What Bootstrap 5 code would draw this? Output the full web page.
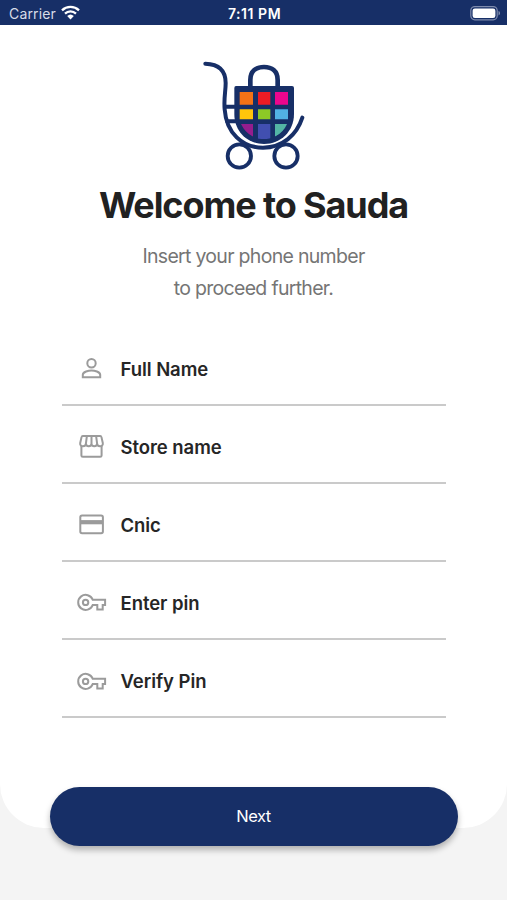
<!DOCTYPE html>
<html lang="en">
<head>
<meta charset="utf-8">
<meta name="viewport" content="width=device-width, initial-scale=1">
<title>Welcome to Sauda</title>
<link href="https://cdn.jsdelivr.net/npm/bootstrap@5.3.0/dist/css/bootstrap.min.css" rel="stylesheet">
<style>
  body { font-family: Inter, "Liberation Sans", sans-serif; background: #f4f4f4; color: #212121; height: 900px; overflow: hidden; }
  svg { display: block; flex: none; }
  .status-bar { height: 25px; background: #172f67; color: #fff; font-size: 14px; line-height: 20px; padding: 3px 7px 0 9px; }
  .status-bar > div { flex: 1 1 0; }
  .carrier { color: #d7dce8; letter-spacing: .15px; line-height: 22px; }
  .clock { font-weight: 600; font-size: 14px; line-height: 22px; letter-spacing: .55px; white-space: nowrap; }
  .panel { height: 803px; border-radius: 0 0 44px 44px; padding-top: 25px; }
  .logo { margin-left: 2px; }
  h1 { font-size: 36px; line-height: 44px; font-weight: 700; letter-spacing: -1.1px; margin-top: 3px; }
  .intro { font-size: 19.5px; line-height: 31.5px; color: #757575; letter-spacing: -.7px; margin-top: 14px; }
  .fields { width: 384px; margin-top: 23.5px; }
  .field { height: 78.15px; border-bottom: 2px solid #cacaca; padding: 6px 0 0 14px; gap: 14px; font-size: 18.5px; font-weight: 600; letter-spacing: -.06px; color: #262626; }
  .field span { padding-top: 2px; }
  .field svg { width: 31px; height: 31px; color: #9b9b9b; }
  .btn-next { width: 408px; height: 59px; margin-top: -41px; background: #172f67; font-size: 16.5px; letter-spacing: -.5px; box-shadow: 0 4px 6px rgba(0,0,0,.28); }
  .btn-next:hover { background: #1f3c80; }
</style>
</head>
<body>
<header class="status-bar d-flex">
  <div class="d-flex carrier">Carrier
    <svg class="ms-1" width="21" height="20" viewBox="0 0 21 20"><g fill="none" stroke="#fff" stroke-width="2.3"><path d="M2 7.3a12.3 12.3 0 0 1 17 0"/><path d="M5 10.6a8 8 0 0 1 11 0"/></g><path fill="#fff" d="M7.2 13a4.8 4.8 0 0 1 6.6 0l-3.3 3.6z"/></svg>
  </div>
  <div class="clock text-center">7:11 PM</div>
  <div class="d-flex justify-content-end">
    <svg width="31" height="20" viewBox="-1 0 31 20"><rect x=".8" y="3.6" width="26.4" height="13.2" rx="4" fill="none" stroke="#7e8bad" stroke-width="1.2"/><rect x="2.6" y="5.4" width="22.8" height="9.6" rx="2.3" fill="#fff"/><path fill="#7e8bad" d="M28.5 8c2.2.6 2.2 3.8 0 4.4z"/></svg>
  </div>
</header>
<main>
  <section class="panel bg-white d-flex flex-column align-items-center">
    <svg class="logo" width="130" height="130" viewBox="0 0 390 390">
      <defs><clipPath id="bag"><path d="M145 120H300V192C300 235 265 267 222 267S145 235 145 192z"/></clipPath></defs>
      <path fill="#172f67" d="M138 108H306Q312 108 312 114V192C312 244 272 282 222 282S133 244 133 192V114Q133 108 138 108z"/>
      <g clip-path="url(#bag)">
        <path fill="#f47216" d="M149 126h40v38h-40z"/><path fill="#ec1c24" d="M204 126h37v38h-37z"/><path fill="#ec068d" d="M255 126h39v38h-39z"/>
        <path fill="#ffc60b" d="M149 178h40v30h-40z"/><path fill="#8cc926" d="M204 178h37v30h-37z"/><path fill="#52b1e4" d="M255 178h39v30h-39z"/>
        <path fill="#941d8e" d="M153 222h36v38Q165 248 153 222z"/><path fill="#414fb0" d="M204 222h37v45h-37z"/><path fill="#53b5a5" d="M255 222h36q-11 26-36 38z"/>
      </g>
      <g fill="none" stroke="#172f67" stroke-linecap="round">
        <path stroke-width="14" d="M181 110V90C181 63 199 51 222 51S263 63 263 90V110"/>
        <path stroke-width="12" d="M46 41C82 42 107 58 107 99C107 126 101 143 104 178C109 249 157 293 219 293C278 293 320 255 337 203"/>
        <path stroke-width="12" d="M107 170h30M111 214h30"/>
        <circle cx="148" cy="318" r="35" stroke-width="11.5"/><circle cx="288" cy="318" r="35" stroke-width="11.5"/>
      </g>
    </svg>
    <h1 class="mb-0">Welcome to Sauda</h1>
    <p class="intro text-center mb-0">Insert your phone number<br>to proceed further.</p>
    <div class="fields">
      <div class="field d-flex align-items-center">
        <svg viewBox="0 0 31 31" fill="none" stroke="currentColor" stroke-width="2"><circle cx="15.5" cy="10.3" r="4.2"/><path d="M6.8 24.2v-2.4c0-3 5.8-4.4 8.7-4.4s8.7 1.4 8.7 4.4v2.4z"/></svg>
        <span>Full Name</span>
      </div>
      <div class="field d-flex align-items-center">
        <svg viewBox="0 0 31 31" fill="none" stroke="currentColor" stroke-width="2" stroke-linejoin="round"><path d="M5.4 14.5v9.9q0 1.4 1.4 1.4h17.4q1.4 0 1.4-1.4v-9.9"/><path d="M6.8 4.9h17.4q1 0 1.2 1l1.4 6.1c.4 1.9-.9 3.3-2.8 3.3s-2.9-1.1-2.9-2.7c0 1.6-1 2.7-2.8 2.7s-2.8-1.1-2.8-2.7c0 1.6-1 2.7-2.8 2.7s-2.8-1.1-2.8-2.7c0 1.6-1 2.7-2.9 2.7s-3.2-1.4-2.8-3.3l1.4-6.1q.2-1 1.2-1zM10.9 4.9l-1 7.7M15.5 4.9v7.7M20.1 4.9l1 7.7"/></svg>
        <span>Store name</span>
      </div>
      <div class="field d-flex align-items-center">
        <svg viewBox="0 0 31 31" fill="none" stroke="currentColor" stroke-width="2"><rect x="4.3" y="6.5" width="22.6" height="17.8" rx="1.8"/><path stroke-width="4.2" d="M4.4 13.2h22.4"/></svg>
        <span>Cnic</span>
      </div>
      <div class="field d-flex align-items-center">
        <svg viewBox="0 0 31 31" fill="none" stroke="currentColor" stroke-width="2"><path d="M16.7 12.7H29.1v5.4H26.7v4.4H21.3v-4.4H16.7a7.5 7.5 0 1 1 0-5.4z"/><circle cx="9.6" cy="15.4" r="2.7"/></svg>
        <span>Enter pin</span>
      </div>
      <div class="field d-flex align-items-center">
        <svg viewBox="0 0 31 31" fill="none" stroke="currentColor" stroke-width="2"><path d="M16.7 12.7H29.1v5.4H26.7v4.4H21.3v-4.4H16.7a7.5 7.5 0 1 1 0-5.4z"/><circle cx="9.6" cy="15.4" r="2.7"/></svg>
        <span>Verify Pin</span>
      </div>
    </div>
  </section>
  <button type="button" class="btn btn-next rounded-pill border-0 text-white d-block mx-auto position-relative">Next</button>
</main>
<script src="https://cdn.jsdelivr.net/npm/bootstrap@5.3.0/dist/js/bootstrap.bundle.min.js"></script>
</body>
</html>
